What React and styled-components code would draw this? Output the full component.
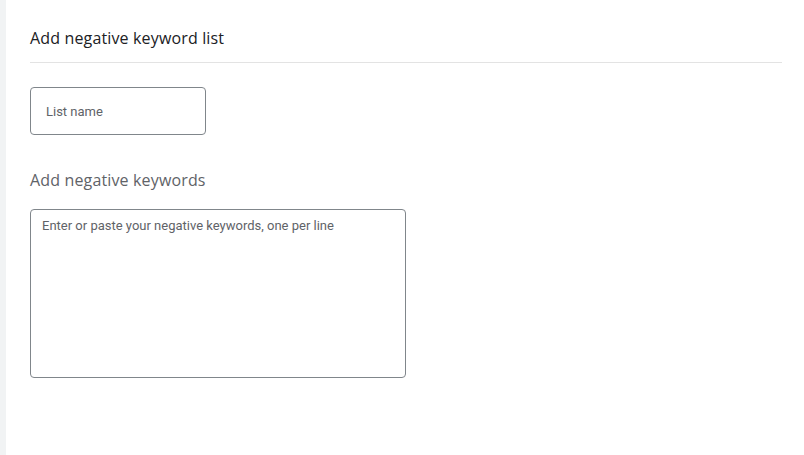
import React from 'react';
import styled, { createGlobalStyle } from 'styled-components';

const GlobalStyle = createGlobalStyle`
  html, body {
    margin: 0;
    padding: 0;
    background: #ffffff;
  }
  body {
    font-family: Roboto, "Liberation Sans", Arial, sans-serif;
  }
`;

const Page = styled.div`
  display: flex;
  min-height: 455px;
`;

const SideStrip = styled.div`
  width: 6px;
  flex-shrink: 0;
  background-color: #f1f3f4;
`;

const Content = styled.main`
  flex: 1;
  padding: 0 22px 0 24px;
  display: flex;
  flex-direction: column;
  align-items: flex-start;
`;

const Header = styled.div`
  align-self: stretch;
  padding: 26px 0 12px;
  border-bottom: 1px solid #e3e3e3;
`;

const Title = styled.h2`
  margin: 0;
  font-family: "Open Sans", Roboto, sans-serif;
  font-size: 16px;
  font-weight: 500;
  letter-spacing: 0.15px;
  line-height: 24px;
  color: #202124;
`;

const SectionTitle = styled.h3`
  margin: 33px 0 17px;
  font-family: "Open Sans", Roboto, sans-serif;
  font-size: 16px;
  font-weight: 500;
  letter-spacing: 0.15px;
  line-height: 24px;
  color: #5f6368;
`;

const TextInput = styled.input`
  box-sizing: border-box;
  margin-top: 24px;
  width: 176px;
  height: 48px;
  padding: 0 15px;
  border: 1px solid #80868b;
  border-radius: 4px;
  font-family: Roboto, "Liberation Sans", sans-serif;
  font-size: 13px;
  color: #202124;
  outline: none;

  &::placeholder {
    color: #5f6368;
  }
`;

const KeywordArea = styled.textarea`
  box-sizing: border-box;
  width: 376px;
  height: 169px;
  padding: 6px 11px;
  border: 1px solid #80868b;
  border-radius: 4px;
  font-family: Roboto, "Liberation Sans", sans-serif;
  font-size: 13px;
  line-height: 20px;
  color: #202124;
  resize: none;
  outline: none;

  &::placeholder {
    color: #5f6368;
  }
`;

const App = () => {
  return (
    <>
      <GlobalStyle />
      <Page>
        <SideStrip />
        <Content>
          <Header>
            <Title>Add negative keyword list</Title>
          </Header>
          <TextInput placeholder="List name" />
          <SectionTitle>Add negative keywords</SectionTitle>
          <KeywordArea placeholder="Enter or paste your negative keywords, one per line" />
        </Content>
      </Page>
    </>
  );
};

export default App;
